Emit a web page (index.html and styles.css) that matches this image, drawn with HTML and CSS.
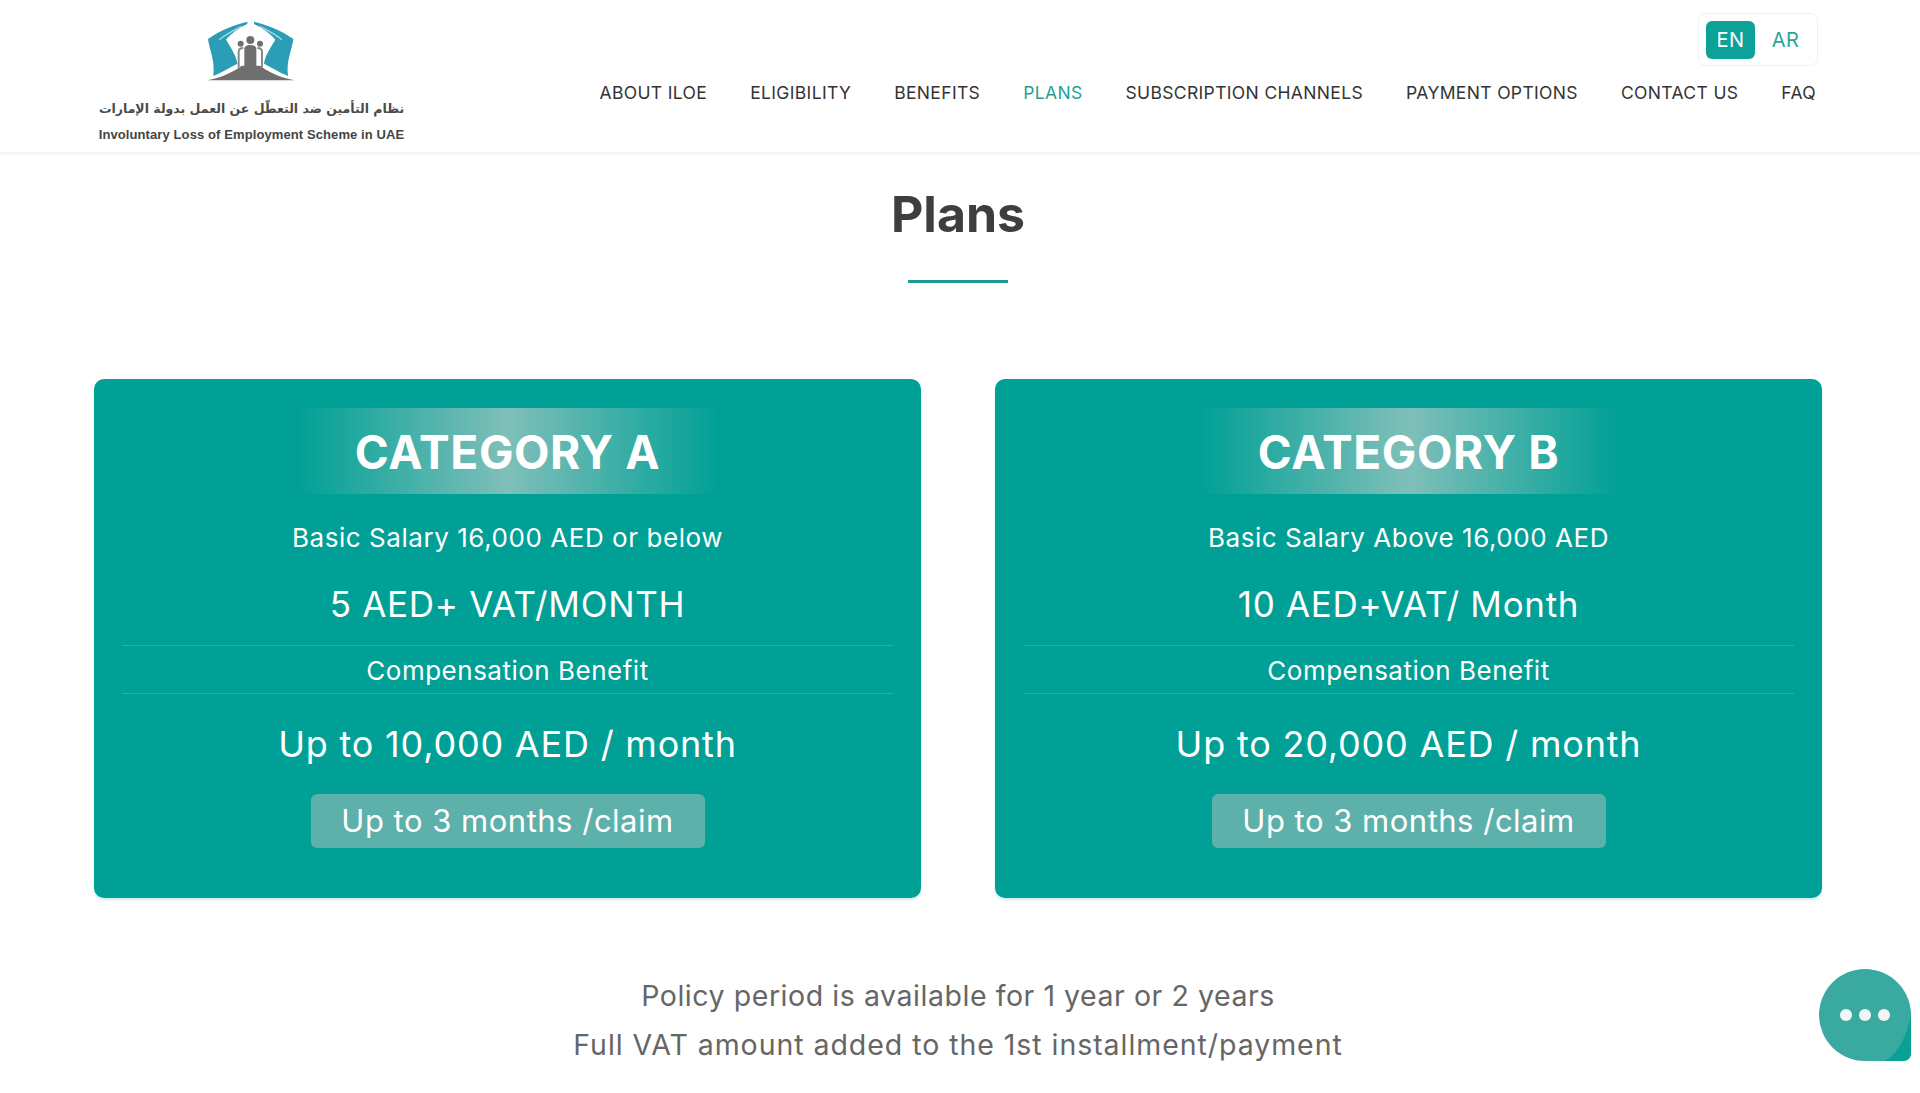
FILE: index.html
```html
<!DOCTYPE html>
<html lang="en">
<head>
<meta charset="utf-8">
<title>Plans</title>
<link rel="stylesheet" href="styles.css">
</head>
<body>
<header class="site-header">
  <a class="logo">
    <svg class="logo-mark" viewBox="0 0 300 216" aria-hidden="true">
      <path class="hand" d="M142 20C105 30 60 45 24 72C28 105 46 135 40 183C65 172 90 158 112 146C110 125 94 100 78 74C94 55 118 38 142 27Z"/>
      <path class="hand" d="M162 20C199 30 244 45 280 72C276 105 258 135 264 183C239 172 214 158 192 146C194 125 210 100 226 74C210 55 186 38 162 27Z"/>
      <path class="crease" d="M58 74C78 58 100 46 125 34M246 74C226 58 204 46 179 34"/>
      <path class="ground" d="M22 196C70 186 105 168 125 152L180 152C200 168 235 186 284 196Z"/>
      <circle class="person" cx="122" cy="86" r="9"/>
      <circle class="person" cx="180" cy="86" r="9"/>
      <circle class="person" cx="151" cy="75" r="12"/>
      <path class="outline" d="M116 158V110C116 102 121 99 130 99M186 158V110C186 102 181 99 172 99"/>
      <path class="person" d="M133 160V102C133 94 141 90 151 90C161 90 169 94 169 102V160Z"/>
    </svg>
    <span class="logo-ar" lang="ar" dir="rtl">نظام التأمين ضد التعطّل عن العمل بدولة الإمارات</span>
    <span class="logo-en">Involuntary Loss of Employment Scheme in UAE</span>
  </a>
  <div class="header-right">
    <div class="lang">
      <span class="lang-item is-active">EN</span>
      <span class="lang-item">AR</span>
    </div>
    <nav class="nav">
      <a>ABOUT ILOE</a>
      <a>ELIGIBILITY</a>
      <a>BENEFITS</a>
      <a class="is-current">PLANS</a>
      <a>SUBSCRIPTION CHANNELS</a>
      <a>PAYMENT OPTIONS</a>
      <a>CONTACT US</a>
      <a>FAQ</a>
    </nav>
  </div>
</header>
<main class="content">
  <h1 class="title">Plans</h1>
  <div class="title-rule"></div>
  <section class="cards">
    <article class="card">
      <h2 class="card-badge">CATEGORY A</h2>
      <p class="salary">Basic Salary 16,000 AED or below</p>
      <p class="price">5 AED+ VAT/MONTH</p>
      <p class="comp-label">Compensation Benefit</p>
      <p class="amount">Up to 10,000 AED / month</p>
      <span class="claim">Up to 3 months /claim</span>
    </article>
    <article class="card">
      <h2 class="card-badge">CATEGORY B</h2>
      <p class="salary">Basic Salary Above 16,000 AED</p>
      <p class="price">10 AED+VAT/ Month</p>
      <p class="comp-label">Compensation Benefit</p>
      <p class="amount">Up to 20,000 AED / month</p>
      <span class="claim">Up to 3 months /claim</span>
    </article>
  </section>
  <div class="notes">
    <p>Policy period is available for 1 year or 2 years</p>
    <p class="note-long">Full VAT amount added to the 1st installment/payment</p>
  </div>
</main>
<div class="chat" aria-label="Chat">
  <svg class="chat-corner" viewBox="0 0 92 92" aria-hidden="true"><path d="M92 46V84C92 89 89 92 84 92H66C80 84 88 66 92 46Z"/></svg>
  <span class="dot"></span><span class="dot"></span><span class="dot"></span>
</div>
</body>
</html>
```
FILE: styles.css
```css
* { box-sizing: border-box; }
html, body { margin: 0; height: 1093px; overflow: hidden; background: #fff; }
body { font-family: Inter, "Open Sans", sans-serif; color: #3c3c3c; position: relative; }
p, h1, h2 { margin: 0; }

.site-header {
  height: 152px;
  padding: 13px 104px 0 98px;
  display: flex;
  justify-content: space-between;
  box-shadow: 0 1px 4px rgba(0, 0, 0, .09);
}
.logo { width: 307px; display: flex; flex-direction: column; align-items: center; padding-top: 2px; }
.logo-mark { width: 100px; height: 72px; flex: none; margin-right: 4px; }
.hand { fill: #2c9db6; }
.crease { fill: none; stroke: #a9d8e2; stroke-width: 4; }
.outline { fill: none; stroke: #8a8a8a; stroke-width: 6; }
.ground, .person { fill: #6f6f6f; }
.logo-ar { font: 700 12.5px "DejaVu Sans", sans-serif; color: #4a4a4a; margin-top: 12px; white-space: nowrap; line-height: 20px; }
.logo-en { font: 700 13px "Liberation Sans", sans-serif; color: #444; margin-top: 8px; white-space: nowrap; line-height: 16px; letter-spacing: .1px; }

.header-right { display: flex; flex-direction: column; align-items: flex-end; }
.lang {
  width: 120px; height: 53px; margin-right: -2px;
  border: 1px solid #eef1f1; border-radius: 8px;
  padding: 7px 6px 7px 7px; display: flex; gap: 6px;
}
.lang-item { width: 49px; height: 38px; display: flex; align-items: center; justify-content: center; font-size: 20px; letter-spacing: .5px; color: #2ba59c; border-radius: 6px; }
.lang-item.is-active { background: #0ca298; color: #fff; }

.nav { display: flex; gap: 43px; margin-top: 16px; font-size: 17.5px; letter-spacing: .35px; line-height: 22px; color: #333; }
.nav .is-current { color: #1f9f97; }

.content { padding: 0 98px 0 94px; }
.title { font-size: 50px; font-weight: 700; line-height: 60px; text-align: center; color: #3e3e3e; margin-top: 32px; }
.title-rule { width: 100px; height: 3px; background: #1b9a94; margin: 36px auto 0; }

.cards { display: grid; grid-template-columns: 827px 827px; gap: 74px; margin-top: 96px; }
.card {
  height: 519px; background: #00a096; border-radius: 10px; color: #fff;
  box-shadow: 0 2px 3px rgba(0, 160, 150, .2);
  padding: 29px 28px 0; display: flex; flex-direction: column; align-items: center; text-align: center;
}
.card-badge {
  width: 420px; height: 86px; font-size: 46px; letter-spacing: .6px; font-weight: 700; line-height: 88px;
  background: linear-gradient(90deg, rgba(128,191,185,0), #80bfb9 50%, rgba(128,191,185,0));
}
.salary { font-size: 26px; letter-spacing: .55px; line-height: 32px; margin-top: 28px; }
.price { font-size: 35px; letter-spacing: .7px; line-height: 44px; margin-top: 28px; }
.comp-label {
  align-self: stretch; height: 49px; line-height: 49px; font-size: 26px; letter-spacing: .5px; margin-top: 19px;
  border-top: 1px solid rgba(255,255,255,.16); border-bottom: 1px solid rgba(255,255,255,.16);
}
.amount { font-size: 36px; letter-spacing: .8px; line-height: 44px; margin-top: 28px; }
.claim { width: 394px; height: 54px; line-height: 54px; font-size: 31px; letter-spacing: .5px; margin-top: 28px; background: #5eb0aa; border-radius: 6px; }

.notes { text-align: center; color: #666; font-size: 28.5px; letter-spacing: .55px; line-height: 49px; margin-top: 73px; }
.note-long { letter-spacing: .95px; }

.chat {
  position: absolute; left: 1819px; top: 969px; width: 92px; height: 92px;
  background: #3aa9a0; border-radius: 46px 46px 8px 46px;
  display: flex; align-items: center; justify-content: center; gap: 7px;
}
.chat-corner { position: absolute; inset: 0; width: 92px; height: 92px; fill: #0aa096; }
.dot { width: 12px; height: 12px; border-radius: 50%; background: #f4f6f6; position: relative; }
```
